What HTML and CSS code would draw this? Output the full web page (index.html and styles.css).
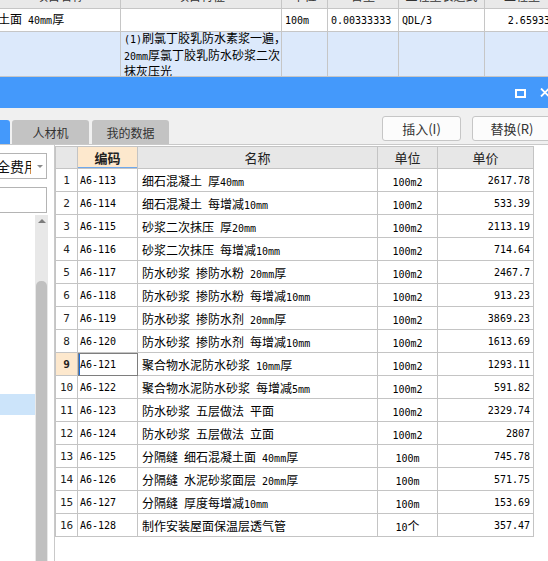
FILE: index.html
```html
<!DOCTYPE html>
<html>
<head>
<meta charset="utf-8">
<link rel="stylesheet" href="styles.css">
</head>
<body>
<div class="bg-table">
  <div class="bg-row bg-head">
    <div><span>项目名称</span></div>
    <div><span>项目特征</span></div>
    <div><span>单位</span></div>
    <div><span>含量</span></div>
    <div><span>工程量表达式</span></div>
    <div><span>工程量</span></div>
  </div>
  <div class="bg-row bg-r1">
    <div class="first"><span>土面<i> 40mm</i>厚</span></div>
    <div></div>
    <div><span><i>100m</i></span></div>
    <div><span><i>0.00333333</i></span></div>
    <div><span><i>QDL/3</i></span></div>
    <div class="num"><span><i>2.659333</i></span></div>
  </div>
  <div class="bg-row bg-r2">
    <div></div>
    <div class="desc"><i>(1)</i>刷氯丁胶乳防水素浆一遍，<br><i>20mm</i>厚氯丁胶乳防水砂浆二次<br>抹灰压光<br><i>(2)</i>聚合物水泥防水砂浆</div>
    <div></div>
    <div></div>
    <div></div>
    <div></div>
  </div>
</div>
<div class="dialog">
  <div class="titlebar">
    <svg class="ic-max" width="11" height="9" viewBox="0 0 11 9"><rect x="1" y="1" width="9" height="7" fill="none" stroke="#fff" stroke-width="2"/></svg>
    <svg class="ic-close" width="10" height="9" viewBox="0 0 10 9"><path d="M1 0.5 L9 8.5 M9 0.5 L1 8.5" stroke="#fff" stroke-width="1.8" fill="none"/></svg>
  </div>
  <div class="toolbar">
    <div class="tabs">
      <div class="tab tab-active"></div>
      <div class="tab">人材机</div>
      <div class="tab">我的数据</div>
    </div>
    <div class="btns">
      <div class="btn">插入(I)</div>
      <div class="btn">替换(R)</div>
    </div>
  </div>
  <div class="main">
    <div class="side">
      <div class="select"><span class="sel-text">全费用</span><span class="arrow"></span></div>
      <div class="input"></div>
      <div class="tree">
        <div class="list"><div class="sel-row"></div></div>
        <div class="scroll">
          <div class="up"></div>
          <div class="thumb"></div>
        </div>
      </div>
    </div>
    <div class="grid-wrap">
      <table class="grid">
        <colgroup><col class="w-no"><col class="w-code"><col class="w-name"><col class="w-unit"><col class="w-price"></colgroup>
        <tr class="head"><th></th><th class="hl">编码</th><th>名称</th><th>单位</th><th>单价</th></tr>
        <tr><td class="no">1</td><td class="code">A6-113</td><td class="name">细石混凝土<i> </i>厚<i>40mm</i></td><td class="unit"><i>100m2</i></td><td class="price">2617.78</td></tr>
        <tr><td class="no">2</td><td class="code">A6-114</td><td class="name">细石混凝土<i> </i>每增减<i>10mm</i></td><td class="unit"><i>100m2</i></td><td class="price">533.39</td></tr>
        <tr><td class="no">3</td><td class="code">A6-115</td><td class="name">砂浆二次抹压<i> </i>厚<i>20mm</i></td><td class="unit"><i>100m2</i></td><td class="price">2113.19</td></tr>
        <tr><td class="no">4</td><td class="code">A6-116</td><td class="name">砂浆二次抹压<i> </i>每增减<i>10mm</i></td><td class="unit"><i>100m2</i></td><td class="price">714.64</td></tr>
        <tr><td class="no">5</td><td class="code">A6-117</td><td class="name">防水砂浆<i> </i>掺防水粉<i> 20mm</i>厚</td><td class="unit"><i>100m2</i></td><td class="price">2467.7</td></tr>
        <tr><td class="no">6</td><td class="code">A6-118</td><td class="name">防水砂浆<i> </i>掺防水粉<i> </i>每增减<i>10mm</i></td><td class="unit"><i>100m2</i></td><td class="price">913.23</td></tr>
        <tr><td class="no">7</td><td class="code">A6-119</td><td class="name">防水砂浆<i> </i>掺防水剂<i> 20mm</i>厚</td><td class="unit"><i>100m2</i></td><td class="price">3869.23</td></tr>
        <tr><td class="no">8</td><td class="code">A6-120</td><td class="name">防水砂浆<i> </i>掺防水剂<i> </i>每增减<i>10mm</i></td><td class="unit"><i>100m2</i></td><td class="price">1613.69</td></tr>
        <tr><td class="no sel">9</td><td class="code focus">A6-121</td><td class="name">聚合物水泥防水砂浆<i> 10mm</i>厚</td><td class="unit"><i>100m2</i></td><td class="price">1293.11</td></tr>
        <tr><td class="no">10</td><td class="code">A6-122</td><td class="name">聚合物水泥防水砂浆<i> </i>每增减<i>5mm</i></td><td class="unit"><i>100m2</i></td><td class="price">591.82</td></tr>
        <tr><td class="no">11</td><td class="code">A6-123</td><td class="name">防水砂浆<i> </i>五层做法<i> </i>平面</td><td class="unit"><i>100m2</i></td><td class="price">2329.74</td></tr>
        <tr><td class="no">12</td><td class="code">A6-124</td><td class="name">防水砂浆<i> </i>五层做法<i> </i>立面</td><td class="unit"><i>100m2</i></td><td class="price">2807</td></tr>
        <tr><td class="no">13</td><td class="code">A6-125</td><td class="name">分隔缝<i> </i>细石混凝土面<i> 40mm</i>厚</td><td class="unit"><i>100m</i></td><td class="price">745.78</td></tr>
        <tr><td class="no">14</td><td class="code">A6-126</td><td class="name">分隔缝<i> </i>水泥砂浆面层<i> 20mm</i>厚</td><td class="unit"><i>100m</i></td><td class="price">571.75</td></tr>
        <tr><td class="no">15</td><td class="code">A6-127</td><td class="name">分隔缝<i> </i>厚度每增减<i>10mm</i></td><td class="unit"><i>100m</i></td><td class="price">153.69</td></tr>
        <tr><td class="no">16</td><td class="code">A6-128</td><td class="name">制作安装屋面保温层透气管</td><td class="unit"><i>10</i>个</td><td class="price">357.47</td></tr>
      </table>
    </div>
  </div>
</div>
</body>
</html>
```

FILE: styles.css
```css
* { box-sizing: border-box; }
html, body { margin: 0; padding: 0; }
body {
  width: 548px;
  height: 561px;
  overflow: hidden;
  background: #fff;
  font-family: "Noto Sans CJK SC", "Noto Sans", sans-serif;
  font-size: 12px;
  color: #000;
}

/* background table (behind dialog) */
.bg-table { width: 560px; background: #fff; }
.bg-table i, .grid i {
  font-style: normal;
  font-family: "DejaVu Sans Mono", monospace;
  font-size: 10px;
}
.bg-row {
  display: grid;
  grid-template-columns: 121px 161px 46px 71px 86px 75px;
  border-bottom: 1px solid #c6c6c6;
}
.bg-row > div {
  border-right: 1px solid #c6c6c6;
  overflow: hidden;
  white-space: nowrap;
}
.bg-head { height: 9px; background: #e9e9e9; }
.bg-head span {
  display: block;
  text-align: center;
  line-height: 12px;
  margin-top: -10px;
  color: #333;
}
.bg-r1 { height: 23px; }
.bg-r1 > div {
  display: flex;
  align-items: center;
  padding-left: 3px;
  line-height: 22px;
}
.bg-r1 > .first { padding-left: 0; }
.bg-r1 > .first span { margin-left: -2px; }
.bg-r1 > .num { justify-content: flex-end; padding-right: 3px; }
.bg-r2 { height: 45px; background: #dce9fb; }
.bg-r2 > .desc {
  padding: 0 2px 0 3px;
  margin-top: -1px;
  line-height: 14.5px;
}

/* dialog */
.dialog { width: 560px; background: #f0f0f0; }
.titlebar {
  height: 31px;
  background: #4499fb;
  display: flex;
  align-items: center;
  justify-content: flex-end;
  padding-right: 10px;
  gap: 14px;
}
.ic-max { margin-top: 1px; }

.toolbar {
  height: 37px;
  display: flex;
  justify-content: space-between;
  border-bottom: 1px solid #c9c9c9;
}
.tabs { display: flex; align-items: flex-end; gap: 3px; }
.tab {
  width: 77px;
  height: 24px;
  background: #c3c3c3;
  border-radius: 3px 3px 0 0;
  color: #333;
  font-size: 12px;
  display: flex;
  align-items: center;
  justify-content: center;
}
.tab-active {
  width: 40px;
  margin-left: -30px;
  margin-right: -1px;
  background: #4499fb;
}
.btns { display: flex; gap: 11px; padding-top: 8px; padding-right: 8px; }
.btn {
  width: 79px;
  height: 25px;
  background: #fcfcfc;
  border: 1px solid #c6c6c6;
  border-radius: 3px;
  font-size: 13px;
  color: #333;
  display: flex;
  align-items: center;
  justify-content: center;
}
.btn + .btn { width: 80px; }

.main { display: flex; height: 416px; }
.side {
  width: 55px;
  background: #fff;
  border-right: 1px solid #c9c9c9;
  padding-top: 8px;
  display: flex;
  flex-direction: column;
}
.select, .input {
  width: 49px;
  height: 26px;
  margin-left: -2px;
  border: 1px solid #b4b4b4;
  background: #fff;
}
.select {
  display: flex;
  align-items: center;
  font-size: 14px;
  color: #111;
}
.sel-text {
  width: 32px;
  overflow: hidden;
  white-space: nowrap;
  text-indent: -3px;
}
.arrow {
  margin-left: 6px;
  width: 0;
  height: 0;
  border-left: 3px solid transparent;
  border-right: 3px solid transparent;
  border-top: 3px solid #8a8a8a;
}
.input { margin-top: 8px; }
.tree { flex: 1; display: flex; margin-top: 2px; }
.list { width: 35px; padding-top: 179px; }
.sel-row { height: 21px; background: #cce4fa; }
.scroll {
  width: 13px;
  background: #e8e8e8;
  display: flex;
  flex-direction: column;
  align-items: center;
}
.up {
  margin-top: 4px;
  width: 0;
  height: 0;
  border-left: 4px solid transparent;
  border-right: 4px solid transparent;
  border-bottom: 4px solid #7c7c7c;
}
.thumb {
  margin-top: 58px;
  width: 11px;
  flex: 1;
  background: #c0c0c0;
  border-radius: 5px 5px 0 0;
}

.grid-wrap { flex: 1; background: #fff; padding-top: 1px; }
.grid {
  border-collapse: collapse;
  table-layout: fixed;
  width: 478px;
}
.w-no { width: 22px; }
.w-code { width: 60px; }
.w-name { width: 240px; }
.w-unit { width: 60px; }
.w-price { width: 96px; }
.grid th, .grid td {
  border: 1px solid #c4c4c4;
  padding: 0;
  white-space: nowrap;
  overflow: hidden;
}
.grid tr { height: 23px; }
.grid tr.head { height: 22px; }
.grid th {
  background: #e7e7e7;
  font-weight: normal;
  font-size: 13px;
  color: #222;
}
.grid th.hl {
  background: #fde8cd;
  font-weight: bold;
  box-shadow: inset 0 -1px 0 #6fa8ec;
}
.grid td.no {
  text-align: center;
  font-family: "DejaVu Sans Mono", monospace;
  font-size: 11px;
  color: #222;
}
.grid td.no.sel { background: #fde8cd; font-weight: bold; }
.grid td.code {
  font-family: "DejaVu Sans Mono", monospace;
  font-size: 10px;
  padding-left: 2px;
}
.grid td.focus {
  outline: 1px solid #7e7e7e;
  outline-offset: -1px;
  box-shadow: inset 2px 0 0 #1b6fe0;
}
.grid td.name { padding-left: 4px; }
.grid td.unit { text-align: center; }
.grid td.price {
  text-align: right;
  padding-right: 3px;
  font-family: "DejaVu Sans Mono", monospace;
  font-size: 10px;
}
```
